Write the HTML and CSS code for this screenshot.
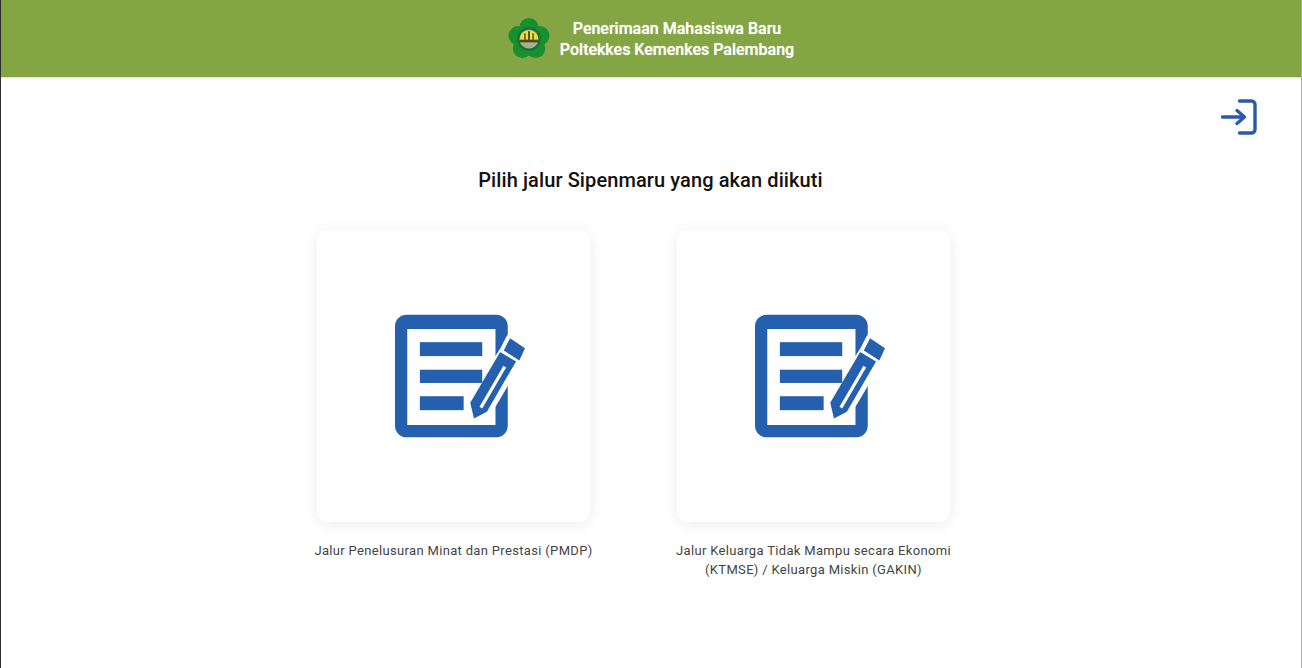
FILE: index.html
```html
<!DOCTYPE html>
<html lang="en">
<head>
  <meta charset="UTF-8">
  <meta name="viewport" content="width=device-width, initial-scale=1.0">
  <title>Sipenmaru - Poltekkes Kemenkes Palembang</title>
  <link rel="stylesheet" href="styles.css">
</head>
<body>
  <header class="topbar">
    <svg class="logo" viewBox="0 0 44 44" aria-hidden="true">
      <g fill="#17902f">
        <circle cx="22" cy="10" r="10"/>
        <circle cx="33.500" cy="18.500" r="10"/>
        <circle cx="29" cy="32" r="10"/>
        <circle cx="15" cy="32" r="10"/>
        <circle cx="10.500" cy="18.500" r="10"/>
      </g>
      <circle cx="22" cy="22" r="12.500" fill="#17752c"/>
      <circle cx="22" cy="22" r="10" fill="#a9b08c"/>
      <path d="M13 19a10 10 0 0 1 18 0v3H13z" fill="#f0dc3c"/>
      <path d="M17 23v-7h1.500v7zM21 23v-9h2v9zM25.500 23v-7H27v7z" fill="#55501f"/>
      <rect x="12" y="23" width="20" height="2.500" fill="#4a4a26"/>
    </svg>
    <div class="topbar-title">
      <div>Penerimaan Mahasiswa Baru</div>
      <div>Poltekkes Kemenkes Palembang</div>
    </div>
  </header>

  <main class="content">
    <div class="toolbar">
      <a class="logout" href="#" aria-label="Masuk">
        <svg viewBox="0 0 38 36" width="38" height="36" fill="none" stroke="#2b5ba8" stroke-width="3.400" stroke-linecap="round" stroke-linejoin="round">
          <path d="M19.500 2h12a3.500 3.500 0 0 1 3.500 3.500v25a3.500 3.500 0 0 1-3.500 3.500h-12"/>
          <path d="M2.500 18h22M17 11.500l7.500 6.500-7.500 6.500"/>
        </svg>
      </a>
    </div>

    <h1 class="heading">Pilih jalur Sipenmaru yang akan diikuti</h1>

    <div class="paths">
      <a class="path-item" href="#">
        <div class="card">
          <svg class="form-icon" viewBox="45 42 392 370" aria-hidden="true">
            <path class="frame" fill-rule="evenodd" d="M80 42h270a35 35 0 0 1 35 35v300a35 35 0 0 1-35 35H80a35 35 0 0 1-35-35V77a35 35 0 0 1 35-35zM82 85v290h266V85z"/>
            <path class="halo" d="M363 143 381 108 392 95 450 135 440 170 422 195 336 340 300 372H262V300z"/>
            <rect class="frame" x="120" y="125" width="188" height="42"/>
            <rect class="frame" x="120" y="208" width="188" height="40"/>
            <rect class="frame" x="120" y="288" width="132" height="42"/>
            <path class="frame" d="M283 355 272 308 362 155 410 183 322 335z"/>
            <path class="halo" d="M300 320 372 196 380 201 308 325z"/>
            <path class="frame" d="M392 113 437 143 420 180 373 150z"/>
          </svg>
        </div>
        <p class="path-label">Jalur Penelusuran Minat dan Prestasi (PMDP)</p>
      </a>
      <a class="path-item" href="#">
        <div class="card">
          <svg class="form-icon" viewBox="45 42 392 370" aria-hidden="true">
            <path class="frame" fill-rule="evenodd" d="M80 42h270a35 35 0 0 1 35 35v300a35 35 0 0 1-35 35H80a35 35 0 0 1-35-35V77a35 35 0 0 1 35-35zM82 85v290h266V85z"/>
            <path class="halo" d="M363 143 381 108 392 95 450 135 440 170 422 195 336 340 300 372H262V300z"/>
            <rect class="frame" x="120" y="125" width="188" height="42"/>
            <rect class="frame" x="120" y="208" width="188" height="40"/>
            <rect class="frame" x="120" y="288" width="132" height="42"/>
            <path class="frame" d="M283 355 272 308 362 155 410 183 322 335z"/>
            <path class="halo" d="M300 320 372 196 380 201 308 325z"/>
            <path class="frame" d="M392 113 437 143 420 180 373 150z"/>
          </svg>
        </div>
        <p class="path-label">Jalur Keluarga Tidak Mampu secara Ekonomi (KTMSE) / Keluarga Miskin (GAKIN)</p>
      </a>
    </div>
  </main>
</body>
</html>
```

FILE: styles.css
```css
* {
  margin: 0;
  padding: 0;
  box-sizing: border-box;
}

body {
  font-family: "Roboto", "Liberation Sans", sans-serif;
  height: 100vh;
  overflow: hidden;
  background: #fff;
  color: #111;
  display: flex;
  flex-direction: column;
  border-left: 1px solid #2f2f2f;
  border-right: 1px solid #aaa;
}

.topbar {
  height: 78px;
  flex-shrink: 0;
  background: #84a544;
  display: flex;
  justify-content: center;
  align-items: center;
  gap: 10px;
  border-bottom: 1px solid #dfe6d0;
}

.logo {
  width: 42px;
  height: 42px;
}

.topbar-title {
  color: #fff;
  font-size: 16px;
  font-weight: 500;
  line-height: 21px;
  text-align: center;
  text-shadow: 0 0 1px rgba(255, 255, 255, 0.7);
}

.content {
  flex: 1;
  padding-top: 21px;
}

.toolbar {
  display: flex;
  justify-content: flex-end;
  padding-right: 43px;
}

.logout {
  display: block;
  height: 36px;
}

.heading {
  font-size: 20px;
  font-weight: 500;
  line-height: 24px;
  letter-spacing: 0.1px;
  text-align: center;
  margin-top: 33px;
  padding-right: 1px;
  color: #111;
}

.paths {
  display: flex;
  justify-content: center;
  gap: 87px;
  margin-top: 38px;
  padding-right: 35px;
}

.path-item {
  width: 273px;
  text-decoration: none;
  color: #444;
  display: block;
}

.card {
  height: 292px;
  border-radius: 10px;
  background: #fff;
  box-shadow: 0 2px 16px rgba(0, 0, 0, 0.08);
  display: flex;
  justify-content: center;
  align-items: center;
  padding-left: 13px;
}

.form-icon {
  width: 130px;
  height: 124px;
}

.frame {
  fill: #2460ad;
}

.halo {
  fill: #fff;
}

.path-label {
  margin: 19px -8px 0;
  font-size: 13px;
  line-height: 19px;
  text-align: center;
  letter-spacing: 0.33px;
}
```
